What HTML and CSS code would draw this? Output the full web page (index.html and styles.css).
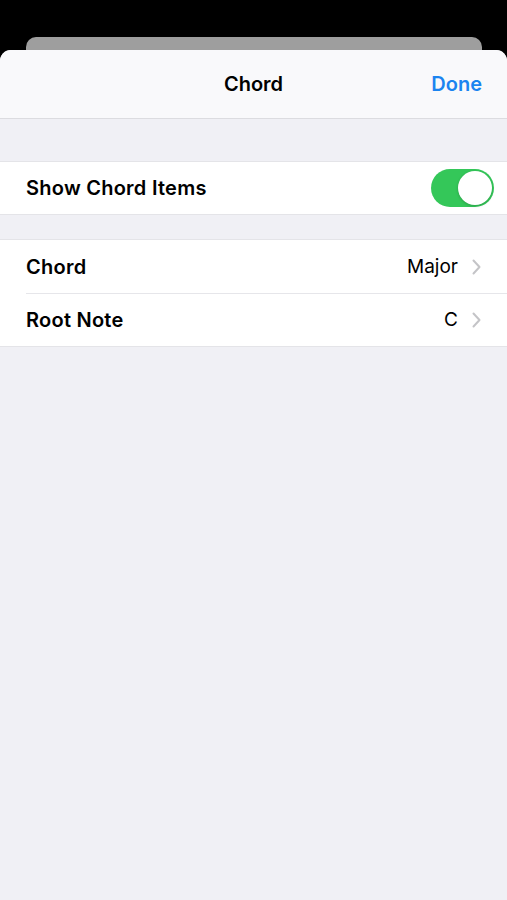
FILE: index.html
```html
<!DOCTYPE html>
<html lang="en">
<head>
    <meta charset="UTF-8">
    <meta name="viewport" content="width=device-width, initial-scale=1.0">
    <title>Chord</title>
    <link rel="stylesheet" href="styles.css">
</head>
<body>

<div class="backdrop"></div>

<div class="sheet">
    <div class="navbar">
        <div class="title">Chord</div>
        <div class="done">Done</div>
    </div>

    <div class="group first">
        <div class="row">
            <span class="label">Show Chord Items</span>
            <span class="toggle"><span class="knob"></span></span>
        </div>
    </div>

    <div class="group">
        <div class="row tall">
            <span class="label">Chord</span>
            <span class="value">Major</span>
            <svg class="chevron" width="9" height="16" viewBox="0 0 9 16"><path d="M1.5 1.5 L7.5 8 L1.5 14.5" fill="none" stroke="#c4c4c7" stroke-width="2" stroke-linecap="round" stroke-linejoin="round"/></svg>
        </div>
        <div class="row tall">
            <span class="label">Root Note</span>
            <span class="value">C</span>
            <svg class="chevron" width="9" height="16" viewBox="0 0 9 16"><path d="M1.5 1.5 L7.5 8 L1.5 14.5" fill="none" stroke="#c4c4c7" stroke-width="2" stroke-linecap="round" stroke-linejoin="round"/></svg>
        </div>
    </div>
</div>

</body>
</html>
```

FILE: styles.css
```css
html, body {
    margin: 0;
    padding: 0;
    height: 100%;
}
body {
    font-family: "Inter", "Liberation Sans", Arial, sans-serif;
    background-color: #000;
    display: flex;
    flex-direction: column;
    overflow: hidden;
}
.backdrop {
    height: 37px;
}
.sheet {
    flex: 1;
    background-color: #f0f0f5;
    border-radius: 11px 11px 0 0;
    margin-top: 13px;
    position: relative;
}
/* the card peeking out behind the sheet */
.sheet::before {
    content: "";
    position: absolute;
    left: 26px;
    right: 25px;
    top: -13px;
    height: 20px;
    background-color: #9e9e9e;
    border-radius: 10px 10px 0 0;
    z-index: -1;
}
.navbar {
    height: 68px;
    background-color: #f9f9fb;
    border-radius: 11px 11px 0 0;
    border-bottom: 1px solid #dcdce0;
    display: flex;
    align-items: center;
    justify-content: center;
    position: relative;
}
.title {
    font-size: 20px;
    font-weight: 600;
    color: #000;
}
.done {
    position: absolute;
    right: 25px;
    font-size: 20px;
    font-weight: 600;
    color: #1b84f0;
}
.group {
    background-color: #fff;
    border-top: 1px solid #e4e4e8;
    border-bottom: 1px solid #e4e4e8;
    margin-top: 24px;
}
.group.first {
    margin-top: 42px;
}
.row {
    height: 52px;
    display: flex;
    align-items: center;
    padding: 0 13px 0 26px;
    position: relative;
}
.row.tall {
    height: 53px;
}
.row + .row::before {
    content: "";
    position: absolute;
    top: 0;
    left: 26px;
    right: 0;
    border-top: 1px solid #e6e6ea;
}
.label {
    flex: 1;
    font-size: 20px;
    font-weight: 600;
    letter-spacing: 0.25px;
    color: #000;
}
.value {
    font-size: 19px;
    color: #000;
    margin-right: 14px;
}
.chevron {
    margin-right: 13px;
}
.toggle {
    width: 63px;
    height: 38px;
    border-radius: 19px;
    background-color: #34c759;
    display: flex;
    align-items: center;
    justify-content: flex-end;
    padding: 0 2px;
    box-sizing: border-box;
}
.knob {
    width: 34px;
    height: 34px;
    border-radius: 50%;
    background-color: #fff;
    box-shadow: 0 1px 3px rgba(0, 0, 0, 0.2);
}
```
